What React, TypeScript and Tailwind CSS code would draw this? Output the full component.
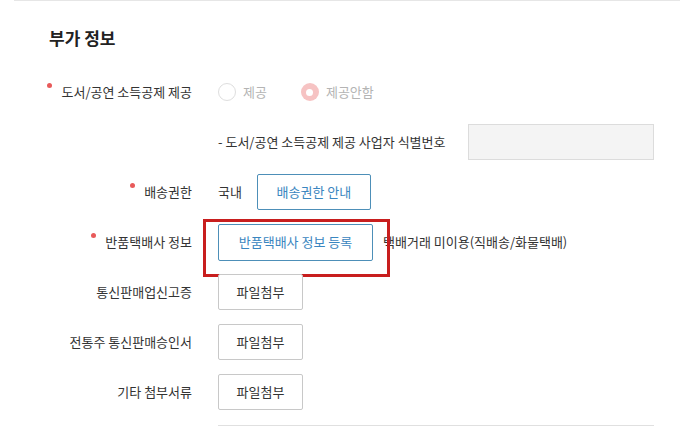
import React from 'react';

const font = { fontFamily: '"Noto Sans CJK KR", "Noto Sans", sans-serif' };

const Label: React.FC<{ text: string; required?: boolean }> = ({ text, required }) => (
  <div className="w-[178px] shrink-0 text-right text-[13px] text-[#333]">
    <span className="relative">
      {required && (
        <span className="absolute left-[-14px] top-[1px] h-[5px] w-[5px] rounded-full bg-[#e85a5a]" />
      )}
      {text}
    </span>
  </div>
);

const Row: React.FC<{ label?: string; required?: boolean; children: React.ReactNode }> = ({
  label,
  required,
  children
}) => (
  <div className="flex h-[50px] items-center">
    {label ? <Label text={label} required={required} /> : <div className="w-[178px] shrink-0" />}
    <div className="relative flex w-[462px] items-center pl-[26px]">{children}</div>
  </div>
);

const FileButton = () => (
  <button className="h-[36px] w-[85px] rounded-[2px] border border-[#c8c8c8] bg-white text-[13px] text-[#333]">
    파일첨부
  </button>
);

export default function App() {
  return (
    <div className="h-[433px] w-[680px] overflow-hidden bg-white" style={font}>
      <div className="ml-[14px] border-t border-[#e6e6e6]">
        <h2 className="pl-[35px] pt-[27px] text-[17px] font-bold leading-[20px] text-[#222]">부가 정보</h2>
        <div className="mt-[19px]">
          <Row label="도서/공연 소득공제 제공" required>
            <div className="flex items-center gap-[7px]">
              <span className="h-[18px] w-[18px] rounded-full border border-[#dedede] bg-white" />
              <span className="text-[13px] text-[#b4b4b4]">제공</span>
            </div>
            <div className="ml-[34px] flex items-center gap-[7px]">
              <span className="flex h-[18px] w-[18px] items-center justify-center rounded-full bg-[#f6c3c3]">
                <span className="h-[7px] w-[7px] rounded-full bg-white" />
              </span>
              <span className="text-[13px] text-[#b4b4b4]">제공안함</span>
            </div>
          </Row>
          <Row>
            <span className="text-[13px] text-[#333]">- 도서/공연 소득공제 제공 사업자 식별번호</span>
            <div className="ml-auto h-[36px] w-[186px] border border-[#dcdcdc] bg-[#f4f4f4]" />
          </Row>
          <Row label="배송권한" required>
            <span className="text-[13px] text-[#333]">국내</span>
            <button className="ml-[15px] h-[36px] w-[114px] rounded-[2px] border border-[#4d8fb8] bg-white text-[13px] text-[#3a86c0]">
              배송권한 안내
            </button>
          </Row>
          <Row label="반품택배사 정보" required>
            <button className="h-[37px] w-[155px] rounded-[2px] border border-[#4d8fb8] bg-white text-[13px] text-[#3a86c0]">
              반품택배사 정보 등록
            </button>
            <span className="ml-[10px] text-[13px] text-[#333]">택배거래 미이용(직배송/화물택배)</span>
            <div className="pointer-events-none absolute left-[11px] top-[-5px] h-[58px] w-[187px] border-[3px] border-[#c81e1e]" />
          </Row>
          <Row label="통신판매업신고증">
            <FileButton />
          </Row>
          <Row label="전통주 통신판매승인서">
            <FileButton />
          </Row>
          <Row label="기타 첨부서류">
            <FileButton />
          </Row>
          <div className="ml-[204px] mt-[8px] w-[436px] border-t border-[#e0e0e0]" />
        </div>
      </div>
    </div>
  );
}
